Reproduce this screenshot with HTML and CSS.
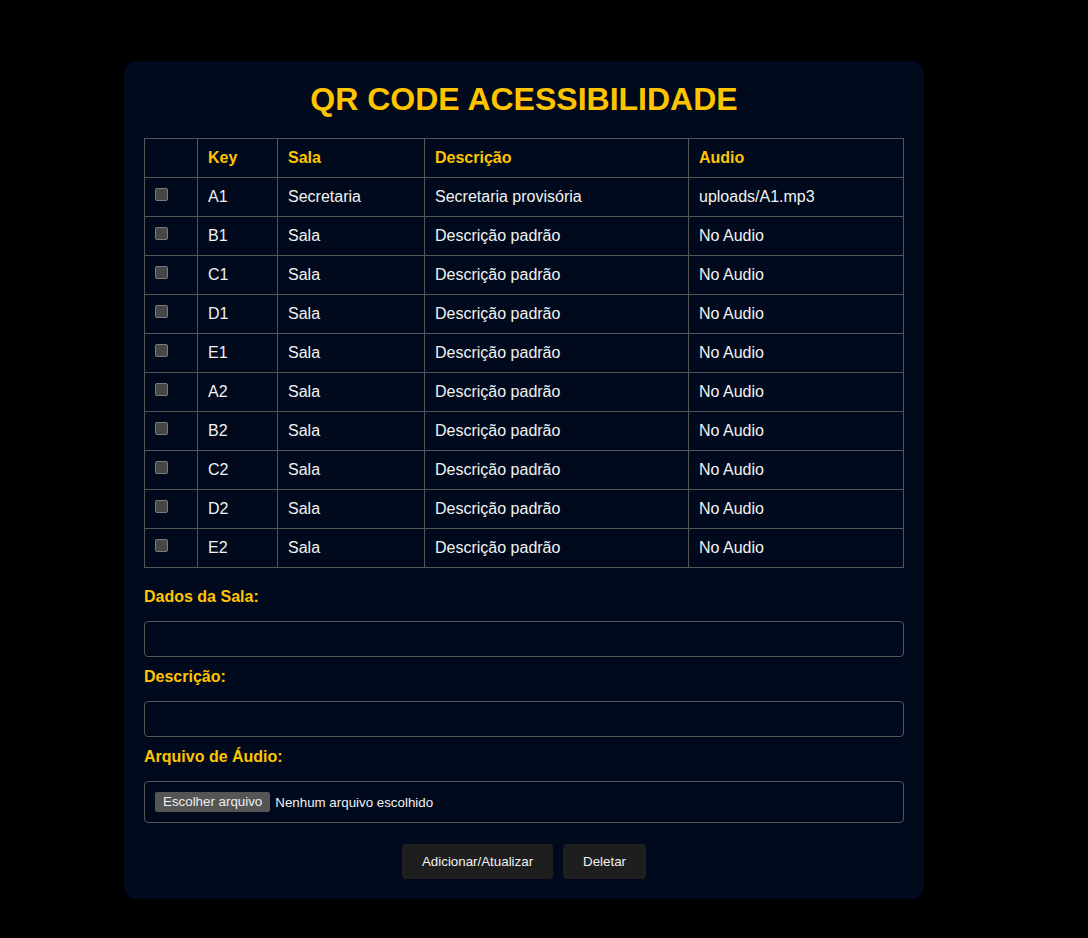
FILE: index.html
```html
<!DOCTYPE html>
<html lang="pt-BR">
<head>
<meta charset="utf-8">
<title>QR Code Acessibilidade</title>
<link rel="stylesheet" href="styles.css">
</head>
<body>
<div class="card">
  <h1 class="title">QR CODE ACESSIBILIDADE</h1>
  <table class="grid">
    <colgroup>
      <col class="c-check"><col class="c-key"><col class="c-sala"><col class="c-desc"><col class="c-audio">
    </colgroup>
    <thead>
      <tr><th></th><th>Key</th><th>Sala</th><th>Descrição</th><th>Audio</th></tr>
    </thead>
    <tbody>
      <tr><td class="cell-check"><input type="checkbox" class="chk"></td><td>A1</td><td>Secretaria</td><td>Secretaria provisória</td><td>uploads/A1.mp3</td></tr>
      <tr><td class="cell-check"><input type="checkbox" class="chk"></td><td>B1</td><td>Sala</td><td>Descrição padrão</td><td>No Audio</td></tr>
      <tr><td class="cell-check"><input type="checkbox" class="chk"></td><td>C1</td><td>Sala</td><td>Descrição padrão</td><td>No Audio</td></tr>
      <tr><td class="cell-check"><input type="checkbox" class="chk"></td><td>D1</td><td>Sala</td><td>Descrição padrão</td><td>No Audio</td></tr>
      <tr><td class="cell-check"><input type="checkbox" class="chk"></td><td>E1</td><td>Sala</td><td>Descrição padrão</td><td>No Audio</td></tr>
      <tr><td class="cell-check"><input type="checkbox" class="chk"></td><td>A2</td><td>Sala</td><td>Descrição padrão</td><td>No Audio</td></tr>
      <tr><td class="cell-check"><input type="checkbox" class="chk"></td><td>B2</td><td>Sala</td><td>Descrição padrão</td><td>No Audio</td></tr>
      <tr><td class="cell-check"><input type="checkbox" class="chk"></td><td>C2</td><td>Sala</td><td>Descrição padrão</td><td>No Audio</td></tr>
      <tr><td class="cell-check"><input type="checkbox" class="chk"></td><td>D2</td><td>Sala</td><td>Descrição padrão</td><td>No Audio</td></tr>
      <tr><td class="cell-check"><input type="checkbox" class="chk"></td><td>E2</td><td>Sala</td><td>Descrição padrão</td><td>No Audio</td></tr>
    </tbody>
  </table>

  <form class="form">
    <label class="label first" for="sala">Dados da Sala:</label>
    <input class="field" id="sala" type="text">
    <label class="label" for="desc">Descrição:</label>
    <input class="field" id="desc" type="text">
    <label class="label">Arquivo de Áudio:</label>
    <div class="file">
      <span class="file-btn">Escolher arquivo</span>
      <span class="file-text">Nenhum arquivo escolhido</span>
    </div>
    <div class="actions">
      <button type="button" class="btn">Adicionar/Atualizar</button>
      <button type="button" class="btn">Deletar</button>
    </div>
  </form>
</div>
</body>
</html>
```

FILE: styles.css
```css
html, body {
  background: #000;
}
body {
  margin: 0;
  padding: 61px 0 39px 124px;
  font-family: "Liberation Sans", Arial, sans-serif;
  color: #f2f2f2;
}
.card {
  width: 800px;
  box-sizing: border-box;
  padding: 20px;
  background: #010a1c;
  border-radius: 12px;
}
.title {
  margin: 0 0 20px;
  text-align: center;
  font-size: 32px;
  line-height: 37px;
  font-weight: bold;
  color: #ffc400;
}
.grid {
  width: 759px;
  border-collapse: collapse;
  table-layout: fixed;
}
.c-check { width: 53px; }
.c-key { width: 80px; }
.c-sala { width: 147px; }
.c-desc { width: 264px; }
.c-audio { width: 215px; }
.grid th, .grid td {
  border: 1px solid #555;
  padding: 10px;
  text-align: left;
  font-size: 16px;
  line-height: 18px;
  height: 18px;
  white-space: nowrap;
}
.grid th {
  color: #ffc400;
  font-weight: bold;
}
.grid td {
  color: #f2f2f2;
}
.grid td.cell-check {
  vertical-align: top;
}
.chk {
  appearance: none;
  -webkit-appearance: none;
  display: block;
  width: 13px;
  height: 13px;
  margin: 0;
  box-sizing: border-box;
  background: #464646;
  border: 1px solid #7a7a7a;
  border-radius: 2px;
}
.form {
  display: flex;
  flex-direction: column;
}
.label {
  display: block;
  margin: 11px 0 15px;
  font-size: 16px;
  line-height: 18px;
  font-weight: bold;
  color: #ffc400;
}
.label.first {
  margin-top: 20px;
}
.field {
  display: block;
  width: 100%;
  height: 36px;
  box-sizing: border-box;
  margin: 0;
  padding: 8px 10px;
  background: #010a1c;
  border: 1px solid #555;
  border-radius: 4px;
  color: #f2f2f2;
  font-family: inherit;
  font-size: 14px;
  outline: none;
}
.file {
  display: flex;
  align-items: center;
  gap: 5px;
  height: 42px;
  box-sizing: border-box;
  padding: 0 10px;
  border: 1px solid #555;
  border-radius: 4px;
  font-size: 13.33px;
}
.file-btn {
  display: inline-block;
  height: 20px;
  line-height: 20px;
  padding: 0 8px;
  background: #555;
  color: #eee;
  border-radius: 2px;
}
.file-text {
  color: #f2f2f2;
}
.actions {
  display: flex;
  justify-content: center;
  gap: 10px;
  margin-top: 21px;
}
.btn {
  height: 35px;
  padding: 0 20px;
  background: #1e1e1e;
  color: #f2f2f2;
  border: none;
  border-radius: 4px;
  font-family: inherit;
  font-size: 13.33px;
  cursor: pointer;
}
```
